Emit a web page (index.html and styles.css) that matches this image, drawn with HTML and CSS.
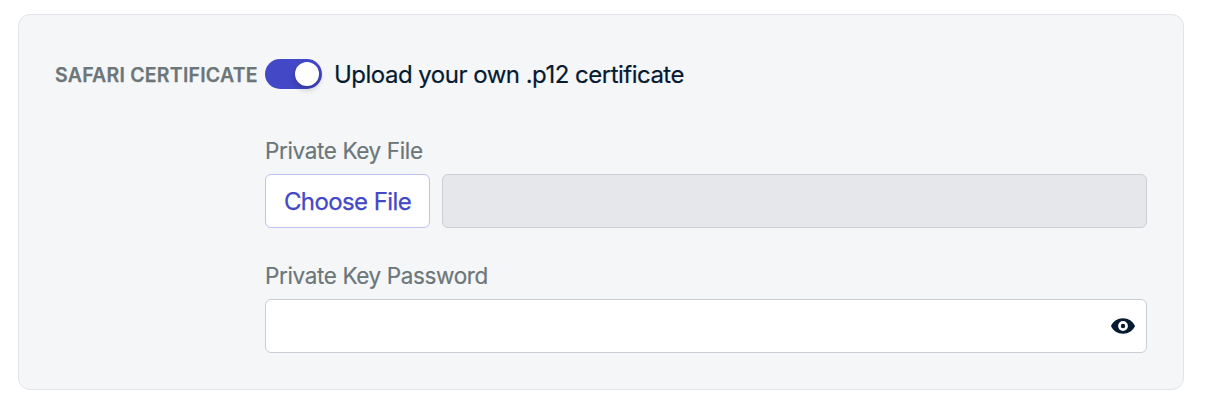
FILE: index.html
```html
<!DOCTYPE html>
<html lang="en">
<head>
<meta charset="utf-8">
<title>Safari Certificate</title>
<link rel="stylesheet" href="styles.css">
</head>
<body>
<section class="card">
  <div class="row">
    <h2 class="heading"><span>SAFARI CERTIFICATE</span></h2>
    <div class="toggle" role="switch" aria-checked="true"><span class="thumb"></span></div>
    <span class="toggle-label">Upload your own .p12 certificate</span>
  </div>
  <div class="fields">
    <div class="field">
      <span class="label label-file">Private Key File</span>
      <div class="file-row">
        <button class="choose" type="button"><span>Choose File</span></button>
        <div class="file-name"></div>
      </div>
    </div>
    <div class="field">
      <span class="label label-password">Private Key Password</span>
      <div class="password">
        <svg class="eye" viewBox="0 0 24 16" width="24" height="16">
          <path fill="#061b31" fill-rule="evenodd" d="M0 8C2.1 3.2 6.6 .3 12 .3S21.900 3.200 24 8C21.900 12.800 17.400 15.700 12 15.700S2.100 12.800 0 8ZM12 3.100A4.900 4.900 0 1 0 12 12.900A4.900 4.900 0 1 0 12 3.100Z"/>
          <circle cx="12" cy="8" r="2.200" fill="#061b31"/>
        </svg>
      </div>
    </div>
  </div>
</section>
</body>
</html>
```
FILE: styles.css
```css
* { box-sizing: border-box; }
body {
  margin: 0;
  padding: 14px 24px 16px 18px;
  background: #fff;
  font-family: Inter, sans-serif;
}
.card {
  height: 376px;
  padding: 44px 36px 36px;
  background: #f5f6f8;
  border: 1px solid #e3e5ea;
  border-radius: 12px;
}
.row { display: flex; align-items: center; height: 30px; }
.heading {
  width: 210px;
  margin: 0;
  padding-top: 2px;
  color: #6c7679;
  font-size: 19.5px;
  font-weight: 600;
  line-height: 30px;
  letter-spacing: 0.23px;
  white-space: nowrap;
  -webkit-text-stroke: 0.25px #6c7679;
}
.toggle {
  display: flex;
  justify-content: flex-end;
  width: 57px;
  height: 30px;
  padding: 3px;
  border-radius: 15px;
  background: #4348c7;
}
.thumb {
  width: 24px;
  height: 24px;
  border-radius: 50%;
  background: #fff;
  box-shadow: 0 3px 6px rgba(0, 0, 0, 0.25);
}
.toggle-label {
  margin-left: 12px;
  padding-top: 2px;
  color: #061b31;
  font-size: 24px;
  line-height: 30px;
  letter-spacing: -0.51px;
  white-space: nowrap;
  -webkit-text-stroke: 0.2px #061b31;
}
.fields { display: grid; gap: 32px; margin: 46px 0 0 210px; }
.label {
  display: block;
  width: max-content;
  height: 39px;
  color: #6c7679;
  font-size: 22.5px;
  line-height: 32px;
  letter-spacing: -0.37px;
  -webkit-text-stroke: 0.2px #6c7679;
}
.file-row { display: flex; gap: 12px; }
.choose {
  width: 165px;
  height: 54px;
  padding: 2px 0 0;
  border: 1px solid #bfc1f0;
  border-radius: 6px;
  background: #fff;
  color: #4348c7;
  font: 24px/50px Inter, sans-serif;
  letter-spacing: -0.6px;
  -webkit-text-stroke: 0.25px #4348c7;
}
.file-name {
  flex: 1;
  border: 1px solid #cdced5;
  border-radius: 6px;
  background: #e6e7eb;
}
.password {
  display: flex;
  align-items: center;
  justify-content: flex-end;
  height: 54px;
  padding-right: 11px;
  border: 1px solid #c9cdd4;
  border-radius: 6px;
  background: #fff;
}
```
